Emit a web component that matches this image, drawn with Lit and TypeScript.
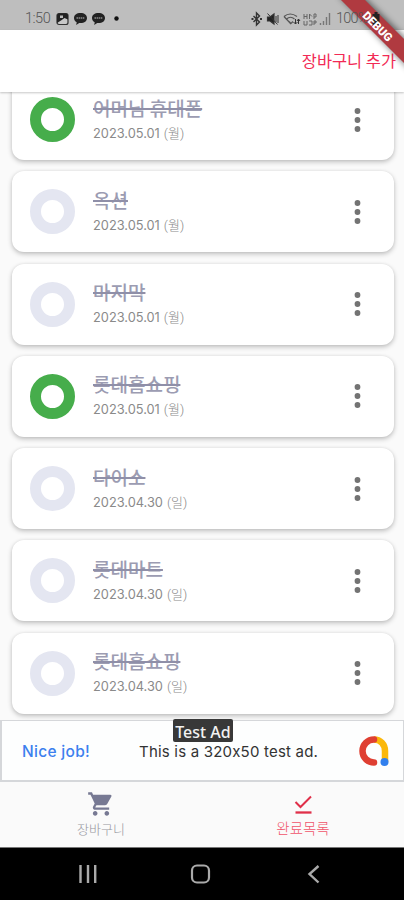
import { LitElement, html, css, svg } from "lit";
import { customElement, property } from "lit/decorators.js";
import { classMap } from "lit/directives/class-map.js";

interface Item {
  title: string;
  date: string;
  day: string;
  done: boolean;
}

const ITEMS: Item[] = [
  { title: "어머님 휴대폰", date: "2023.05.01", day: "(월)", done: true },
  { title: "옥션", date: "2023.05.01", day: "(월)", done: false },
  { title: "마지막", date: "2023.05.01", day: "(월)", done: false },
  { title: "롯데홈쇼핑", date: "2023.05.01", day: "(월)", done: true },
  { title: "다이소", date: "2023.04.30", day: "(일)", done: false },
  { title: "롯데마트", date: "2023.04.30", day: "(일)", done: false },
  { title: "롯데홈쇼핑", date: "2023.04.30", day: "(일)", done: false },
];

@customElement("status-bar")
class StatusBar extends LitElement {
  static styles = css`
    :host {
      position: relative;
      z-index: 3;
      display: flex;
      flex: none;
      align-items: center;
      height: 30px;
      box-sizing: border-box;
      padding: 7px 22px 0 25px;
      font: 300 14.5px/22px Roboto, "Noto Sans", sans-serif;
      color: #555;
    }
    .time { width: 31px; letter-spacing: -0.5px; white-space: nowrap; }
    svg { display: block; flex: none; }
    .right { margin-left: auto; display: flex; align-items: center; }
    .pct { width: 34px; margin-left: 3px; letter-spacing: -0.8px; white-space: nowrap; }
  `;
  private chat() {
    return html`<svg width="18" height="14" viewBox="0 0 18 14">
      <path d="M7.500 1C3.600 1 1 3 1 6c0 2 1 3.300 2.700 4.200L3.200 13l3-2H7.500c4 0 6.500-2 6.500-5S11.400 1 7.500 1Z" fill="#222"/>
      <path d="M3.500 6h8" stroke="#8d8d8d" stroke-width="1.700" stroke-dasharray="1.500 .6"/>
    </svg>`;
  }
  render() {
    return html`
      <span class="time">1:50</span>
      <svg width="17" height="14" viewBox="0 0 17 14">
        <rect x="1" y="1.500" width="11" height="11" rx="2" fill="#c8c8c8" stroke="#333" stroke-width="1.200"/>
        <path d="M1 3.500q0-2 2-2h7q2 0 2 2v4L8.500 6 5 8.500 1 11Z" fill="#222"/>
        <rect x="4" y="3.500" width="3" height="2.500" fill="#bbb"/>
      </svg>
      ${this.chat()}${this.chat()}
      <svg width="14" height="14" viewBox="0 0 14 14"><circle cx="7.500" cy="6.500" r="2.200" fill="#111"/></svg>
      <div class="right">
        <svg width="84" height="16" viewBox="0 0 84 16" fill="none" stroke="#333" stroke-width="1.200">
          <path d="M4.500 5l6 6L7.500 14V2l3 3-6 6" stroke-width="1.400"/>
          <path d="M2.500 8h2M11 8h2" stroke-width="2"/>
          <path d="M18.500 6H21L25 3v10l-4-3H18.500Z" fill="#222"/>
          <path d="M18.500 2.500l10 11M27 5v6M29 4v8" stroke-width="1"/>
          <path d="M35 5.500q6-5 13 0M37.500 8q4-3.500 8 0M40 10.500l2 2 2-2M35 5.500l7 7.500" stroke="#555"/>
          <path d="M46.500 8v5M44.500 11l2 2 2-2M49.500 13V8M48 10l1.500-2 1.500 2" stroke="#333" stroke-width="1"/>
          <path d="M55 3v5M58 3v5M55 5.500h3M60.500 8V3l2.500 2.500M65 3v5M65 3h2v3h-2M55 10v4h3v-4M60 10h3v4h-3M65 10v4M65 10h2v2h-2" stroke="#666" stroke-width="1"/>
          <path d="M71.500 12v2M74.500 10v4M77.500 6v8M80.500 2v12" stroke="#777" stroke-width="1.400"/>
        </svg>
        <span class="pct">100%</span>
        <svg width="12" height="14" viewBox="0 0 12 14" fill="#222">
          <path d="M2.500 2h2V0h3v2h2v11h-7Z"/>
        </svg>
      </div>`;
  }
}

@customElement("purchase-card")
class PurchaseCard extends LitElement {
  @property({ attribute: false }) item!: Item;
  static styles = css`
    :host {
      display: flex;
      flex: none;
      align-items: center;
      height: 81px;
      box-sizing: border-box;
      padding: 0 32px 0 18px;
      border-radius: 12px;
      background: #fff;
      box-shadow: 0 2px 5px rgba(0, 0, 0, 0.24), 0 0 3px rgba(0, 0, 0, 0.06);
    }
    .ring {
      width: 23px;
      height: 23px;
      border: 11px solid #e4e6f1;
      border-radius: 50%;
      flex: none;
    }
    .ring.done { border-color: #46ad4b; }
    .text { flex: 1; margin-left: 18px; padding-bottom: 1px; }
    .title {
      font: 500 19px/25px "Noto Sans CJK KR", sans-serif;
      color: #9c9cb2;
      text-decoration: line-through;
      text-decoration-color: #8f8fa8;
      text-decoration-thickness: 1.5px;
      width: max-content;
    }
    .date {
      display: flex;
      gap: 4px;
      font: 400 12.800px/20px Inter, "Noto Sans CJK KR", sans-serif;
      color: #8a8a8a;
      margin-top: 4px;
    }
    .day { font: 300 13px/20px Roboto, "Noto Sans CJK KR", sans-serif; }
    svg { display: block; }
  `;
  render() {
    return html`
      <div class=${classMap({ ring: true, done: this.item.done })}></div>
      <div class="text">
        <div class="title">${this.item.title}</div>
        <div class="date"><span>${this.item.date}</span><span class="day">${this.item.day}</span></div>
      </div>
      <svg width="9" height="26" viewBox="0 0 9 26" fill="#737373">
        <circle cx="4.500" cy="4" r="2.900"/><circle cx="4.500" cy="13" r="2.900"/><circle cx="4.500" cy="22" r="2.900"/>
      </svg>`;
  }
}

@customElement("ad-banner")
class AdBanner extends LitElement {
  static styles = css`
    :host {
      position: relative;
      display: flex;
      flex: none;
      align-items: center;
      height: 62px;
      box-sizing: border-box;
      border: solid #d5d7da;
      border-width: 1px 1px 2px 2px;
      padding: 0 13px 0 20px;
      background: #fdfefe;
      font: 400 15px/22px Inter, sans-serif;
      white-space: nowrap;
    }
    .cta { width: 117px; color: #3c80ee; font: 500 15.500px/22px Inter, sans-serif; letter-spacing: 0.3px; }
    .msg { color: #333; letter-spacing: 0.2px; font-feature-settings: "calt" 0; }
    .cta, .msg { padding-top: 2px; }
    .logo { margin-left: auto; display: block; }
    .tag {
      position: absolute;
      left: 171px;
      top: -2px;
      width: 60px;
      height: 23px;
      border-radius: 2px;
      background: #383838;
      color: #f2f2f2;
      font: 500 16px/27px "Noto Sans", sans-serif;
      text-align: center;
    }
  `;
  render() {
    return html`
      <span class="cta">Nice job!</span>
      <span class="msg">This is a 320x50 test ad.</span>
      <svg class="logo" width="32" height="32" viewBox="0 0 32 32" fill="none" stroke-width="6.500">
        <path d="M16 4.500c6.500 0 11 5 11 11.500v11" stroke="#fbb80b"/>
        <path d="M16 4.500a11.400 11.400 0 0 0 0 23" stroke="#df3f32" stroke-linecap="round"/>
        <circle cx="26.500" cy="27" r="4" fill="#3180ee"/>
      </svg>
      <span class="tag">Test Ad</span>`;
  }
}

@customElement("app-root")
class AppRoot extends LitElement {
  static styles = css`
    :host {
      position: relative;
      display: flex;
      flex-direction: column;
      width: 404px;
      height: 900px;
      overflow: hidden;
      background: linear-gradient(#bebebe 30px, #fafafa 30px);
      font-family: "Noto Sans CJK KR", sans-serif;
    }
    .appbar {
      flex: none;
      display: flex;
      align-items: center;
      justify-content: flex-end;
      height: 62px;
      box-sizing: border-box;
      padding: 0 8px 2px 0;
      background: #fff;
      box-shadow: 0 1px 2px rgba(0, 0, 0, 0.22);
      z-index: 1;
      color: #f22a55;
      font-size: 16.400px;
    }
    .list {
      flex: none;
      height: 628px;
      overflow: hidden;
      display: flex;
      flex-direction: column;
      justify-content: flex-end;
      gap: 11.250px;
      padding: 0 10px 6.500px 12px;
      box-sizing: border-box;
    }
    .tabs { flex: none; display: flex; height: 65px; background: #fafafa; }
    .tab {
      flex: 1;
      display: flex;
      flex-direction: column;
      align-items: center;
      padding-top: 8px;
      color: #95959d;
      font-size: 13px;
      line-height: 20px;
      font-weight: 300;
    }
    .tab.active { color: #f0546b; font-size: 14.500px; }
    .tab svg { display: block; margin-bottom: 1px; }
    .tab.active svg { margin-bottom: 0; }
    .sysnav {
      flex: none;
      display: flex;
      justify-content: space-between;
      align-items: center;
      height: 53px;
      box-sizing: border-box;
      padding: 0 80px 0 76px;
      background: #000;
      border-top: 1px solid #777;
    }
    .ribbon { position: absolute; right: 0; top: 0; z-index: 2; }
    .ribbon.top { z-index: 4; }
    .ribbon text { font: 900 11.500px Roboto, sans-serif; letter-spacing: 0; }
    .shade { filter: blur(3px); }
  `;
  render() {
    return html`
      <status-bar></status-bar>
      <div class="appbar">장바구니 추가</div>
      <div class="list">${ITEMS.map((i) => html`<purchase-card .item=${i}></purchase-card>`)}</div>
      <ad-banner></ad-banner>
      <div class="tabs">
        <div class="tab">
          <svg width="28" height="28" viewBox="0 0 24 24" fill="#777993">
            <path d="M7 18c-1.100 0-1.990.9-1.990 2S5.900 22 7 22s2-.9 2-2-.9-2-2-2zM1 2v2h2l3.600 7.590-1.350 2.450c-.16.280-.25.610-.25.960 0 1.100.9 2 2 2h12v-2H7.420c-.14 0-.25-.11-.25-.25l.03-.12.900-1.630h7.450c.750 0 1.410-.41 1.750-1.030l3.580-6.490A1 1 0 0 0 20 4H5.210l-.94-2H1zm16 16c-1.100 0-1.990.9-1.990 2s.89 2 1.990 2 2-.9 2-2-.9-2-2-2z"/>
          </svg>
          <span>장바구니</span>
        </div>
        <div class="tab active">
          <svg width="28" height="28" viewBox="0 0 28 28" fill="none" stroke="#e02f49" stroke-width="2">
            <path d="M6.500 12l5 5L22 6.500"/><path d="M6.500 22.500h16" stroke-width="2.300"/>
          </svg>
          <span>완료목록</span>
        </div>
      </div>
      <div class="sysnav">
        <svg width="24" height="24" viewBox="0 0 24 24" stroke="#aaa" stroke-width="2.400"><path d="M4.500 3v18M12 3v18M19.200 3v18"/></svg>
        <svg width="24" height="24" viewBox="1.500 0 24 24" fill="none" stroke="#aaa" stroke-width="2.200"><rect x="3.500" y="3.500" width="17" height="17" rx="5"/></svg>
        <svg width="20" height="24" viewBox="0 0 20 24" fill="none" stroke="#aaa" stroke-width="2.400"><path d="M14.500 4L5.500 12l9 8.500"/></svg>
      </div>
      <svg class="ribbon" width="74" height="74" viewBox="330 0 74 74">
        ${svg`<path class="shade" d="M338-5L362-5 410 42V70Z" fill="#000" opacity=".5"/>
        <path d="M341 0H365L404 39V63Z" fill="#b03a40"/>`}
      </svg>
      <svg class="ribbon top" width="74" height="74" viewBox="330 0 74 74">
        <text transform="translate(377.500 26.500) rotate(45)" text-anchor="middle" y="4" fill="#fff">DEBUG</text>
      </svg>`;
  }
}
